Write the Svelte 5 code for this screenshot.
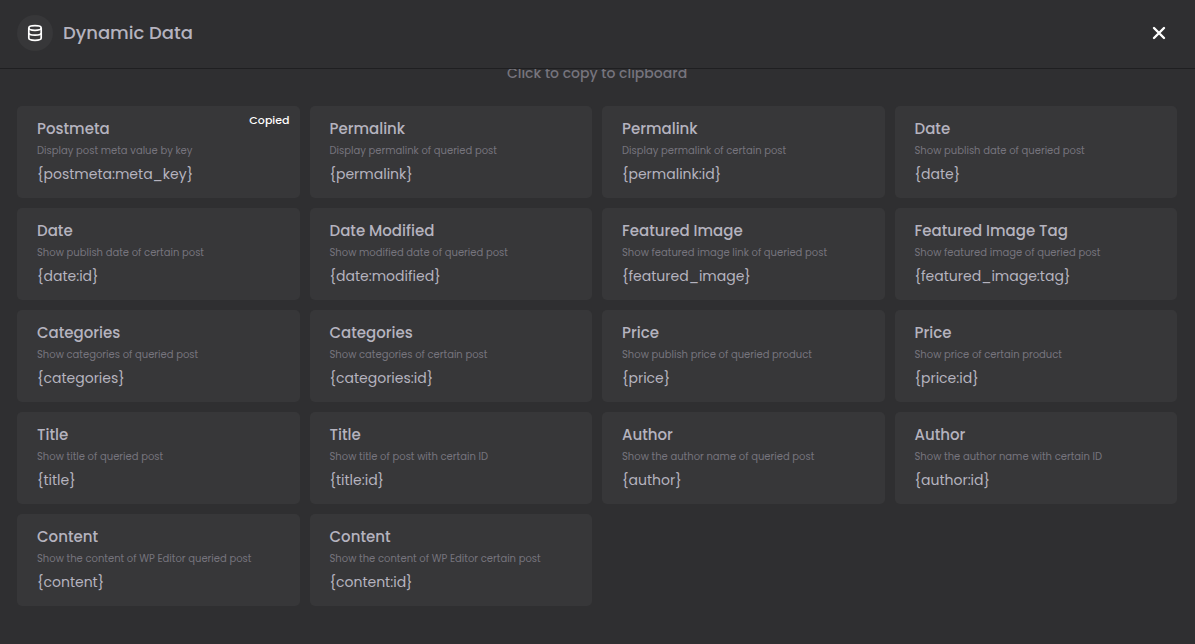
<script>
  const items = [
    { title: 'Postmeta', desc: 'Display post meta value by key', code: '{postmeta:meta_key}' },
    { title: 'Permalink', desc: 'Display permalink of queried post', code: '{permalink}' },
    { title: 'Permalink', desc: 'Display permalink of certain post', code: '{permalink:id}' },
    { title: 'Date', desc: 'Show publish date of queried post', code: '{date}' },
    { title: 'Date', desc: 'Show publish date of certain post', code: '{date:id}' },
    { title: 'Date Modified', desc: 'Show modified date of queried post', code: '{date:modified}' },
    { title: 'Featured Image', desc: 'Show featured image link of queried post', code: '{featured_image}' },
    { title: 'Featured Image Tag', desc: 'Show featured image of queried post', code: '{featured_image:tag}' },
    { title: 'Categories', desc: 'Show categories of queried post', code: '{categories}' },
    { title: 'Categories', desc: 'Show categories of certain post', code: '{categories:id}' },
    { title: 'Price', desc: 'Show publish price of queried product', code: '{price}' },
    { title: 'Price', desc: 'Show price of certain product', code: '{price:id}' },
    { title: 'Title', desc: 'Show title of queried post', code: '{title}' },
    { title: 'Title', desc: 'Show title of post with certain ID', code: '{title:id}' },
    { title: 'Author', desc: 'Show the author name of queried post', code: '{author}' },
    { title: 'Author', desc: 'Show the author name with certain ID', code: '{author:id}' },
    { title: 'Content', desc: 'Show the content of WP Editor queried post', code: '{content}' },
    { title: 'Content', desc: 'Show the content of WP Editor certain post', code: '{content:id}' },
  ]

  let open = $state(true)
  let copied = $state('{postmeta:meta_key}')

  async function copy(code) {
    try {
      await navigator.clipboard.writeText(code)
      copied = code
    } catch (err) {
      console.error('Could not copy', err)
    }
  }
</script>

{#if open}
  <div class="panel">
    <header>
      <span class="icon">
        <svg width="18" height="18" viewBox="0 0 18 18" fill="none" stroke="#fff" stroke-width="1.7">
          <ellipse cx="9" cy="4" rx="6.2" ry="2.3" />
          <path d="M2.8 4v10c0 1.5 2.6 2.3 6.2 2.3s6.2-.8 6.2-2.3V4" />
          <path d="M2.8 9c0 1.3 2.6 2.1 6.2 2.1s6.2-.8 6.2-2.1" />
        </svg>
      </span>
      <h1>Dynamic Data</h1>
      <button class="close" aria-label="Close" onclick={() => (open = false)}>
        <svg width="14" height="14" viewBox="0 0 14 14" stroke="#fff" stroke-width="2.4" stroke-linecap="round">
          <path d="M2 2l10 10M12 2L2 12" />
        </svg>
      </button>
    </header>

    <main>
      <p class="hint">Click to copy to clipboard</p>
      <div class="grid">
        {#each items as item (item.code)}
          <button class="card" onclick={() => copy(item.code)}>
            <span class="title">{item.title}</span>
            <span class="desc">{item.desc}</span>
            <span class="code">{item.code}</span>
            {#if copied === item.code}
              <span class="copied">Copied</span>
            {/if}
          </button>
        {/each}
      </div>
    </main>
  </div>
{/if}

<style>
  :global(body) {
    background: #2f2f31;
  }

  .panel {
    font-family: Poppins, Inter, sans-serif;
    color: #b5b3bf;
  }

  header {
    position: sticky;
    top: 0;
    z-index: 1;
    display: flex;
    align-items: center;
    gap: 10px;
    padding: 15px 17px 17px;
    background: #2f2f31;
    border-bottom: 1px solid #1f1f21;
  }

  .icon {
    display: flex;
    align-items: center;
    justify-content: center;
    width: 36px;
    height: 36px;
    border-radius: 50%;
    background: #373739;
  }

  h1 {
    flex: 1;
    margin: 0;
    font-size: 18px;
    font-weight: 500;
    line-height: 24px;
  }

  .close {
    display: flex;
    padding: 11px 12px;
    border: none;
    background: none;
    cursor: pointer;
  }

  main {
    padding: 0 18px 36px 17px;
  }

  .hint {
    margin: -6px 0 23px;
    font-size: 14px;
    font-weight: 500;
    line-height: 20px;
    text-align: center;
    color: #76747d;
  }

  .grid {
    display: grid;
    grid-template-columns: repeat(4, 1fr);
    gap: 10px;
  }

  .card {
    position: relative;
    display: flex;
    flex-direction: column;
    padding: 12px 20px;
    border: none;
    border-radius: 5px;
    background: #373739;
    color: inherit;
    font-family: inherit;
    text-align: left;
    cursor: pointer;
  }

  .card:hover {
    background: #3b3b3d;
  }

  .title {
    font-size: 15px;
    font-weight: 500;
    line-height: 22px;
  }

  .desc {
    font-size: 10px;
    line-height: 22px;
    color: #76747d;
  }

  .code {
    font-size: 14px;
    line-height: 24px;
  }

  .copied {
    position: absolute;
    top: 6px;
    right: 10px;
    font-size: 11px;
    font-weight: 500;
    line-height: 16px;
    color: #fff;
  }

  @media (max-width: 900px) {
    .grid {
      grid-template-columns: repeat(2, 1fr);
    }
  }
</style>
